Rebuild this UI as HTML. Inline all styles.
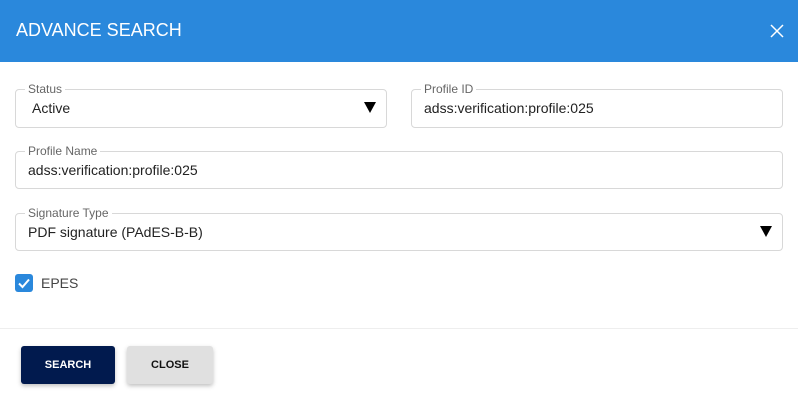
<!DOCTYPE html>
<html><head><style>
body{margin:0;width:798px;height:400px;background:#fff;font-family:"Liberation Sans",Arial,sans-serif;position:relative;overflow:hidden}
.hdr{position:absolute;left:0;top:0;width:798px;height:62px;background:#2a88dc}
.hdr .t{position:absolute;left:16px;top:20px;color:#fff;font-size:18px}
.box{position:absolute;border:1px solid #d8d8d8;border-radius:4px;box-sizing:border-box}
.lbl{position:absolute;top:-8px;left:9px;background:#fff;padding:0 3px;font-size:12px;color:#666;line-height:14px}
.val{position:absolute;left:12px;top:10px;font-size:14px;color:#222}
.arr{position:absolute;right:10px;top:12px;width:0;height:0;border-left:6px solid transparent;border-right:6px solid transparent;border-top:11px solid #000}
.btn{position:absolute;top:346px;height:38px;border-radius:3px;font-size:11px;font-weight:bold;text-align:center;line-height:38px;box-shadow:0 2px 4px rgba(0,0,0,.25)}
</style></head><body>
<div class="hdr"><div class="t">ADVANCE SEARCH</div>
<svg style="position:absolute;left:770px;top:24px" width="14" height="14"><path d="M1 1L13 13M13 1L1 13" stroke="#fff" stroke-width="1.5"/></svg></div>
<div class="box" style="left:15px;top:89px;width:372px;height:39px"><div class="lbl">Status</div><div class="val" style="left:16px">Active</div><div class="arr"></div></div>
<div class="box" style="left:411px;top:89px;width:372px;height:39px"><div class="lbl">Profile ID</div><div class="val">adss:verification:profile:025</div></div>
<div class="box" style="left:15px;top:151px;width:768px;height:38px"><div class="lbl">Profile Name</div><div class="val">adss:verification:profile:025</div></div>
<div class="box" style="left:15px;top:213px;width:768px;height:38px"><div class="lbl">Signature Type</div><div class="val">PDF signature (PAdES-B-B)</div><div class="arr"></div></div>
<div style="position:absolute;left:15px;top:274px;width:18px;height:18px;background:#2a88dc;border-radius:3px"><svg width="18" height="18"><path d="M4 9.5L7.5 13L14 5.5" stroke="#fff" stroke-width="2" fill="none"/></svg></div>
<div style="position:absolute;left:41px;top:275px;font-size:14px;color:#444">EPES</div>
<div style="position:absolute;left:0;top:328px;width:798px;height:1px;background:#eee"></div>
<div class="btn" style="left:21px;width:94px;background:#011a4e;color:#fff">SEARCH</div>
<div class="btn" style="left:127px;width:86px;background:#e0e0e0;color:#111">CLOSE</div>
</body></html>
